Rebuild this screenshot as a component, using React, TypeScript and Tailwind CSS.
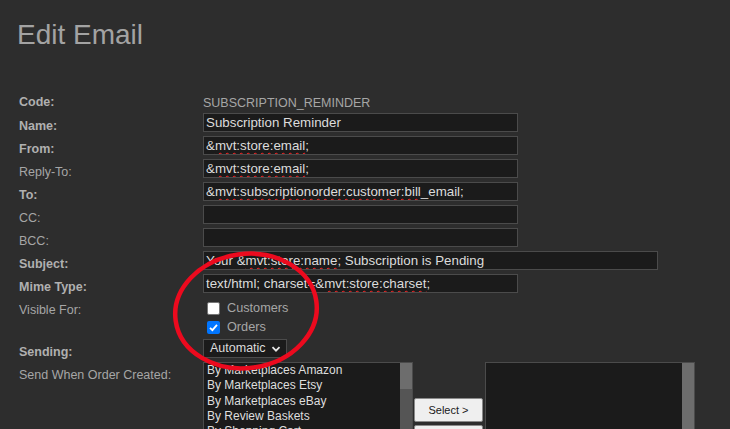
import React from "react";

type Part = string | { sq: string };

const Field = ({ parts, wide }: { parts: Part[]; wide?: boolean }) => (
  <div
    className={`h-[19px] ${wide ? "w-[455px]" : "w-[315px]"} overflow-hidden whitespace-nowrap border border-[#4b4b4b] bg-[#1b1b1b] px-[2px] text-[13.33px] leading-[17px] text-[#dcdcdc]`}
  >
    {parts.map((p, i) =>
      typeof p === "string" ? (
        <span key={i}>{p}</span>
      ) : (
        <span
          key={i}
          className="[text-decoration-line:underline] [text-decoration-style:wavy] [text-decoration-color:#ff2424] [text-decoration-thickness:1px] [text-underline-offset:2px] [text-decoration-skip-ink:none]"
        >
          {p.sq}
        </span>
      )
    )}
  </div>
);

const Row = ({
  label,
  bold,
  children,
  h = "h-[23px]",
}: {
  label: string;
  bold?: boolean;
  children?: React.ReactNode;
  h?: string;
}) => (
  <div className={`flex ${h}`}>
    <div
      className={`w-[184px] shrink-0 pt-[8px] text-[12.5px] leading-[14px] ${bold ? "font-bold text-[#b0b0b0]" : "text-[#a6a6a6]"}`}
    >
      {label}
    </div>
    <div className="pt-[2px]">{children}</div>
  </div>
);

const Check = ({ checked, label }: { checked?: boolean; label: string }) => (
  <div className="flex h-[19px] items-center">
    <div
      className={`ml-[4px] flex h-[13px] w-[13px] items-center justify-center rounded-[2px] ${checked ? "bg-[#0075ff]" : "border border-[#767676] bg-white"}`}
    >
      {checked && (
        <svg width="11" height="11" viewBox="0 0 11 11">
          <path d="M2 5.8 L4.4 8.2 L9 2.8" fill="none" stroke="white" strokeWidth="1.8" />
        </svg>
      )}
    </div>
    <span className="ml-[7px] text-[12.7px] text-[#a6a6a6]">{label}</span>
  </div>
);

const items = [
  "By Marketplaces Amazon",
  "By Marketplaces Etsy",
  "By Marketplaces eBay",
  "By Review Baskets",
  "By Shopping Cart",
];

export default function App() {
  return (
    <div className="relative h-[429px] w-[730px] overflow-hidden bg-[#2d2d2d] font-['Liberation_Sans',Arial,sans-serif]">
      <h1 className="px-[17px] pt-[19px] text-[28px] font-normal leading-[32px] text-[#a3a3a3]">
        Edit Email
      </h1>
      <div className="mt-[36px] pl-[19px]">
        <div className="flex h-[24px]">
          <div className="w-[184px] shrink-0 pt-[8px] text-[12.5px] font-bold leading-[14px] text-[#b0b0b0]">
            Code:
          </div>
          <div className="pt-[9px] text-[12.5px] leading-[14px] text-[#a6a6a6]">
            SUBSCRIPTION_REMINDER
          </div>
        </div>
        <Row label="Name:" bold>
          <Field parts={["Subscription Reminder"]} />
        </Row>
        <Row label="From:" bold>
          <Field parts={["&", { sq: "mvt:store:email" }, ";"]} />
        </Row>
        <Row label="Reply-To:">
          <Field parts={["&", { sq: "mvt:store:email" }, ";"]} />
        </Row>
        <Row label="To:" bold>
          <Field
            parts={["&", { sq: "mvt:subscriptionorder:customer:bill" }, "_email;"]}
          />
        </Row>
        <Row label="CC:">
          <Field parts={[""]} />
        </Row>
        <Row label="BCC:">
          <Field parts={[""]} />
        </Row>
        <Row label="Subject:" bold>
          <Field
            wide
            parts={["Your &", { sq: "mvt:store:name" }, "; Subscription is Pending"]}
          />
        </Row>
        <Row label="Mime Type:" bold>
          <Field parts={["text/html; charset=&", { sq: "mvt:store:charset" }, ";"]} />
        </Row>
        <Row label="Visible For:" h="h-[42px]">
          <div className="pt-[2px]">
            <Check label="Customers" />
            <Check checked label="Orders" />
          </div>
        </Row>
        <Row label="Sending:" bold>
          <div className="flex h-[19px] w-[84px] items-center justify-between border border-[#4b4b4b] bg-[#1b1b1b] pl-[6px] pr-[5px] text-[12.5px] text-[#dcdcdc]">
            <span>Automatic</span>
            <svg width="10" height="10" viewBox="0 0 10 10">
              <path d="M1.5 3.2 L5 6.7 L8.5 3.2" fill="none" stroke="#e6e6e6" strokeWidth="1.8" />
            </svg>
          </div>
        </Row>
        <Row label="Send When Order Created:" h="h-[90px]">
          <div className="flex items-start">
            <div className="flex h-[90px] w-[210px] border border-[#4b4b4b] bg-[#1b1b1b]">
              <div className="flex-1 overflow-hidden pl-[3px] text-[12px] leading-[15.3px] text-[#dedede]">
                {items.map((t) => (
                  <div key={t} className="whitespace-nowrap">
                    {t}
                  </div>
                ))}
              </div>
              <div className="flex w-[12px] flex-col bg-[#555555]">
                <div className="h-[26px] bg-[#6d6d6d]" />
              </div>
            </div>
            <div className="ml-[1px] mr-[2px] mt-[36px] flex flex-col gap-[3px]">
              <button className="h-[24px] w-[69px] rounded-[2px] border border-[#8a8a8a] bg-[#efefef] text-[11px] text-[#1a1a1a]">
                Select &gt;
              </button>
              <button className="h-[24px] w-[69px] rounded-[2px] border border-[#8a8a8a] bg-[#efefef] text-[11px] text-[#1a1a1a]">
                &lt; Remove
              </button>
            </div>
            <div className="flex h-[90px] w-[210px] border border-[#4b4b4b] bg-[#1b1b1b]">
              <div className="flex-1" />
              <div className="w-[12px] bg-[#6d6d6d]" />
            </div>
          </div>
        </Row>
      </div>
      <svg
        className="pointer-events-none absolute left-0 top-0"
        width="730"
        height="429"
        viewBox="0 0 730 429"
      >
        <ellipse
          cx="246"
          cy="311"
          rx="71"
          ry="57"
          transform="rotate(-8 246 311)"
          fill="none"
          stroke="#ec0a1e"
          strokeWidth="4.5"
        />
      </svg>
    </div>
  );
}
